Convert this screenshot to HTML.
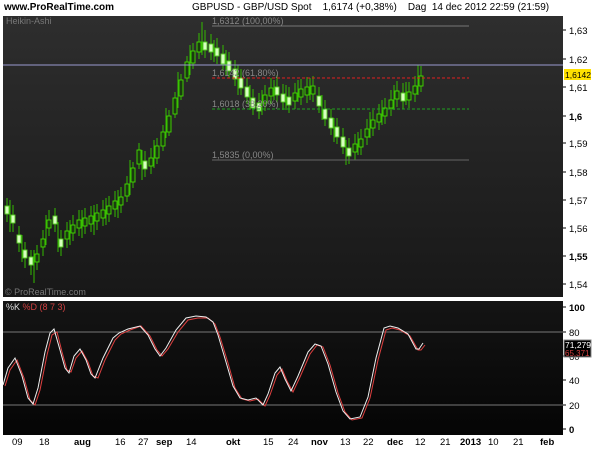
<!DOCTYPE html>
<html><head><meta charset="utf-8"><style>
body{margin:0;width:600px;height:450px;background:#fff;overflow:hidden;font-family:"Liberation Sans",Arial,sans-serif;position:relative}
.t{position:absolute;font-size:10px;color:#000;white-space:nowrap}
svg{position:absolute;left:0;top:0}
.u{fill:#1a3a10;stroke:#44dd00;stroke-width:0.9}
.d{fill:#d8ffc0;stroke:#55cc22;stroke-width:0.9}
</style></head><body>
<div class="t" style="left:4px;top:2px;font-weight:bold;font-size:10px">www.ProRealTime.com</div>
<div class="t" style="left:192px;top:2px;font-size:10px">GBPUSD - GBP/USD Spot &nbsp;&nbsp; 1,6174 (+0,38%) &nbsp;&nbsp; Dag &nbsp;14 dec 2012 22:59 (21:59)</div>
<svg width="600" height="450">
<defs><linearGradient id="g1" x1="0" y1="0" x2="0" y2="1"><stop offset="0" stop-color="#2e2e2e"/><stop offset="1" stop-color="#181818"/></linearGradient>
<linearGradient id="g2" x1="0" y1="0" x2="0" y2="1"><stop offset="0" stop-color="#141414"/><stop offset="1" stop-color="#050505"/></linearGradient></defs>
<rect x="3" y="16" width="560" height="281" fill="url(#g1)"/>
<rect x="3" y="301" width="560" height="134" fill="url(#g2)"/>
<path stroke="#33bb00" stroke-width="1" fill="none" d="M7 198V222 M13 205V232 M19 226V252 M25 242V268 M31 250V275 M37 245V270 M43 230V256 M49 210V236 M55 208V232 M61 230V256 M67 222V248 M73 215V241 M79 210V236 M85 208V234 M91 206V232 M97 204V230 M103 200V226 M109 196V222 M115 191V217 M121 187V213 M127 176V202 M133 162V188 M139 143V169 M145 151V177 M151 148V174 M157 138V164 M163 125V151 M169 110V136 M175 92V118 M181 74V100 M187 56V82 M193 43V69 M199 33V59 M205 30V58 M211 34V60 M217 38V64 M223 45V71 M229 52V78 M235 60V86 M241 69V95 M247 78V104 M253 89V115 M259 93V119 M265 85V111 M271 78V104 M277 75V103 M283 84V110 M289 87V113 M295 83V109 M301 79V105 M307 77V103 M313 76V102 M319 87V113 M325 100V126 M331 109V135 M337 118V144 M343 128V154 M349 138V164 M355 134V160 M361 129V155 M367 119V145 M373 110V136 M379 104V130 M385 98V124 M391 90V116 M397 81V107 M403 83V109 M409 82V108 M415 76V102 M421 66V92
M10 200V232 M22 235V262 M34 250V283 M46 215V245 M58 222V252 M70 220V245 M82 210V238 M94 205V235 M106 198V225 M118 190V218 M130 160V195 M142 150V180 M154 140V168 M166 108V138 M178 72V108 M190 45V75 M202 22V55 M214 40V62 M226 50V75 M238 65V95 M250 85V110 M262 90V115 M274 80V100 M286 85V110 M298 80V102 M310 78V100 M322 95V120 M334 118V142 M346 140V165 M358 132V155 M370 112V138 M382 100V125 M394 85V110 M406 82V105 M418 65V95"/>
<g>
<rect class="d" x="5" y="206" width="4" height="8"/><rect class="d" x="11" y="215" width="4" height="8"/><rect class="d" x="17" y="235" width="4" height="8"/><rect class="d" x="23" y="250" width="4" height="8"/><rect class="d" x="29" y="257" width="4" height="8"/><rect class="u" x="35" y="254" width="4" height="8"/><rect class="u" x="41" y="239" width="4" height="8"/><rect class="u" x="47" y="220" width="4" height="8"/><rect class="d" x="53" y="216" width="4" height="8"/><rect class="d" x="59" y="239" width="4" height="8"/><rect class="u" x="65" y="231" width="4" height="8"/><rect class="u" x="71" y="225" width="4" height="8"/><rect class="u" x="77" y="220" width="4" height="8"/><rect class="u" x="83" y="218" width="4" height="8"/><rect class="u" x="89" y="216" width="4" height="8"/><rect class="u" x="95" y="213" width="4" height="8"/><rect class="u" x="101" y="210" width="4" height="8"/><rect class="u" x="107" y="206" width="4" height="8"/><rect class="u" x="113" y="201" width="4" height="8"/><rect class="u" x="119" y="197" width="4" height="8"/><rect class="u" x="125" y="184" width="4" height="12"/><rect class="u" x="131" y="168" width="4" height="14"/><rect class="u" x="137" y="150" width="4" height="14"/><rect class="d" x="143" y="161" width="4" height="8"/><rect class="u" x="149" y="158" width="4" height="8"/><rect class="u" x="155" y="146" width="4" height="12"/><rect class="u" x="161" y="132" width="4" height="14"/><rect class="u" x="167" y="116" width="4" height="16"/><rect class="u" x="173" y="98" width="4" height="16"/><rect class="u" x="179" y="80" width="4" height="16"/><rect class="u" x="185" y="62" width="4" height="16"/><rect class="u" x="191" y="51" width="4" height="12"/><rect class="u" x="197" y="42" width="4" height="10"/><rect class="d" x="203" y="42" width="4" height="8"/><rect class="d" x="209" y="44" width="4" height="8"/><rect class="d" x="215" y="48" width="4" height="8"/><rect class="d" x="221" y="54" width="4" height="10"/><rect class="d" x="227" y="61" width="4" height="10"/><rect class="d" x="233" y="69" width="4" height="10"/><rect class="d" x="239" y="78" width="4" height="10"/><rect class="d" x="245" y="87" width="4" height="10"/><rect class="d" x="251" y="98" width="4" height="10"/><rect class="d" x="257" y="103" width="4" height="8"/><rect class="u" x="263" y="95" width="4" height="8"/><rect class="u" x="269" y="88" width="4" height="8"/><rect class="d" x="275" y="87" width="4" height="8"/><rect class="d" x="281" y="94" width="4" height="8"/><rect class="d" x="287" y="97" width="4" height="8"/><rect class="u" x="293" y="93" width="4" height="8"/><rect class="u" x="299" y="89" width="4" height="8"/><rect class="u" x="305" y="87" width="4" height="8"/><rect class="u" x="311" y="86" width="4" height="8"/><rect class="d" x="317" y="96" width="4" height="10"/><rect class="d" x="323" y="109" width="4" height="10"/><rect class="d" x="329" y="118" width="4" height="10"/><rect class="d" x="335" y="127" width="4" height="10"/><rect class="d" x="341" y="137" width="4" height="10"/><rect class="d" x="347" y="148" width="4" height="8"/><rect class="u" x="353" y="144" width="4" height="8"/><rect class="u" x="359" y="139" width="4" height="8"/><rect class="u" x="365" y="129" width="4" height="8"/><rect class="u" x="371" y="120" width="4" height="8"/><rect class="u" x="377" y="114" width="4" height="8"/><rect class="u" x="383" y="108" width="4" height="8"/><rect class="u" x="389" y="100" width="4" height="8"/><rect class="u" x="395" y="91" width="4" height="8"/><rect class="d" x="401" y="93" width="4" height="8"/><rect class="u" x="407" y="92" width="4" height="8"/><rect class="u" x="413" y="86" width="4" height="8"/><rect class="u" x="419" y="76" width="4" height="10"/>
</g>
<line x1="3" y1="65" x2="563" y2="65" stroke="#9a9ad0" stroke-width="1"/>
<line x1="212" y1="26" x2="469" y2="26" stroke="#777"/>
<line x1="212" y1="160" x2="469" y2="160" stroke="#666"/>
<line x1="212" y1="78" x2="469" y2="78" stroke="#e02020" stroke-dasharray="3,2"/>
<line x1="212" y1="109" x2="469" y2="109" stroke="#20a020" stroke-dasharray="3,2"/>
<g font-size="9" fill="#888" font-family="Liberation Sans,sans-serif">
<text x="6" y="24" fill="#777">Heikin-Ashi</text>
<text x="212" y="24">1,6312 (100,00%)</text>
<text x="212" y="76">1,6142 (61,80%)</text>
<text x="212" y="107">1,6018 (38,20%)</text>
<text x="212" y="158">1,5835 (0,00%)</text>
<text x="5" y="295" fill="#777">© ProRealTime.com</text>
<text x="6" y="310" fill="#ddd">%K <tspan fill="#d04040">%D (8 7 3)</tspan></text>
</g>
<line x1="3" y1="332" x2="563" y2="332" stroke="#777"/>
<line x1="3" y1="405" x2="563" y2="405" stroke="#777"/>
<polyline fill="none" stroke="#e04040" points="5,386 10,370 17,360 24,378 30,400 35,405 40,390 47,355 52,335 57,332 62,352 67,370 71,372 76,358 82,351 88,362 93,376 98,378 105,360 115,340 121,334 130,330 141,326 150,336 157,350 162,356 168,349 178,332 188,320 198,318 208,318 215,324 220,337 228,363 235,388 242,399 250,401 258,399 265,406 270,395 277,375 282,369 287,381 293,392 300,377 310,354 317,345 323,347 330,365 338,393 345,412 352,420 362,418 370,398 378,360 386,330 392,328 400,330 410,336 418,350 421,350 425,345"/>
<polyline fill="none" stroke="#eee" points="3,385 8,368 15,358 22,376 28,398 33,404 38,388 45,352 50,333 54,329 60,350 65,368 69,373 74,356 80,349 86,360 91,374 95,378 103,358 113,338 119,333 128,329 140,326 148,335 155,349 160,356 166,348 176,330 186,318 196,316 206,317 213,322 218,335 226,362 233,386 240,398 248,400 256,398 263,405 268,394 275,373 280,367 285,379 291,391 298,376 308,352 315,344 321,346 328,364 336,392 343,411 350,419 360,417 368,397 376,358 384,328 390,326 398,328 408,334 416,349 419,349 423,343"/>
<g font-size="9.5" fill="#000" font-family="Liberation Sans,sans-serif">
<path stroke="#000" d="M563 30h3M563 59h3M563 87h3M563 116h3M563 143h3M563 172h3M563 200h3M563 228h3M563 256h3M563 284h3M563 307h3M563 332h3M563 356h3M563 380h3M563 405h3M563 429h3"/>
<text x="569" y="34">1,63</text><text x="569" y="63">1,62</text><text x="569" y="91">1,61</text><text x="569" y="120" font-weight="bold">1,6</text><text x="569" y="147">1,59</text><text x="569" y="176">1,58</text><text x="569" y="204">1,57</text><text x="569" y="232">1,56</text><text x="569" y="260" font-weight="bold">1,55</text><text x="569" y="288">1,54</text>
<text x="569" y="311" font-weight="bold">100</text><text x="569" y="336">80</text><text x="569" y="360">60</text><text x="569" y="384">40</text><text x="569" y="409">20</text><text x="569" y="433" font-weight="bold">0</text>
<text x="12" y="445">09</text><text x="39" y="445">18</text><text x="74" y="445" font-weight="bold">aug</text><text x="115" y="445">16</text><text x="138" y="445">27</text><text x="156" y="445" font-weight="bold">sep</text><text x="186" y="445">14</text><text x="226" y="445" font-weight="bold">okt</text><text x="263" y="445">15</text><text x="288" y="445">24</text><text x="311" y="445" font-weight="bold">nov</text><text x="340" y="445">13</text><text x="363" y="445">22</text><text x="387" y="445" font-weight="bold">dec</text><text x="415" y="445">12</text><text x="440" y="445">21</text><text x="460" y="445" font-weight="bold">2013</text><text x="488" y="445">10</text><text x="513" y="445">21</text><text x="540" y="445" font-weight="bold">feb</text>
</g>
<rect x="564" y="69" width="27" height="11" fill="#ffe000"/>
<text x="565" y="78" font-size="8.5" font-family="Liberation Sans,sans-serif">1,6142</text>
<rect x="564" y="340" width="27" height="17" fill="#000" stroke="#888"/>
<text x="565" y="348" font-size="8.5" fill="#fff" font-family="Liberation Sans,sans-serif">71,279</text>
<text x="565" y="356" font-size="8" fill="#d04040" font-family="Liberation Sans,sans-serif">65,371</text>
</svg>
</body></html>
